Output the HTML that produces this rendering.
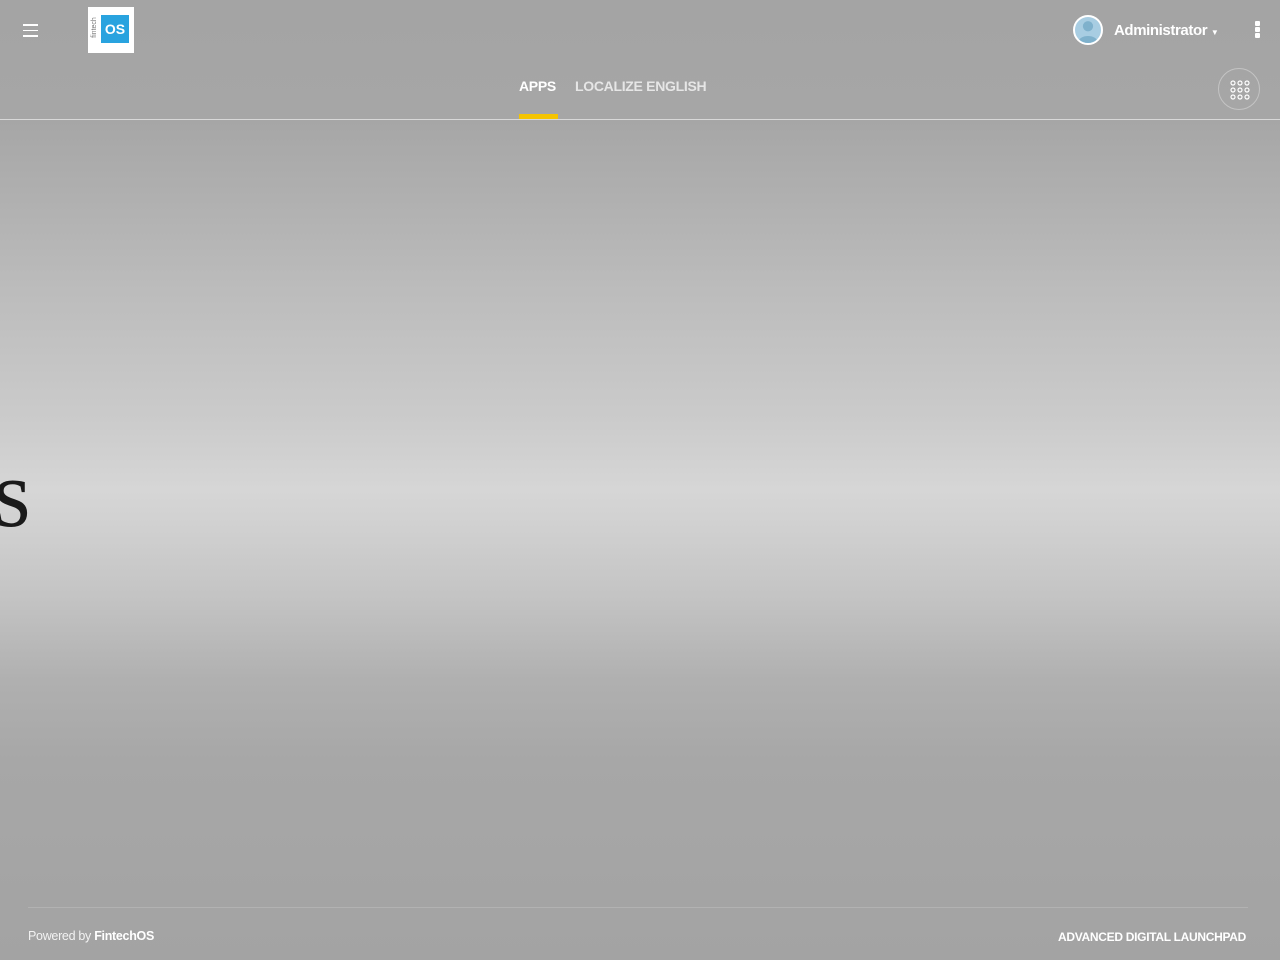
<!DOCTYPE html>
<html><head><meta charset="utf-8"><style>
html,body{margin:0;padding:0;width:1280px;height:960px;overflow:hidden;}
body{position:relative;font-family:"Liberation Sans",sans-serif;
background:linear-gradient(to bottom,#a4a4a4 0px,#a6a6a6 120px,#bdbdbd 300px,#cbcbcb 420px,#d6d6d6 490px,#d0d0d0 530px,#c3c3c3 600px,#b0b0b0 680px,#a7a7a7 760px,#a3a3a3 960px);}
.hdr{position:absolute;left:0;top:0;width:1280px;height:119px;border-bottom:1px solid #d8d8d8;}
.ham{position:absolute;left:23px;top:24px;width:15px;}
.ham div{height:1.5px;background:#fff;margin-bottom:4px;}
.logo{position:absolute;left:88px;top:7px;width:46px;height:46px;background:#fff;}
.logo .b{position:absolute;left:13px;top:8px;width:28px;height:28px;background:#29a3df;color:#fff;font-weight:bold;font-size:14px;line-height:28px;text-align:center;}
.logo .v{position:absolute;left:-4px;top:17px;font-size:7px;color:#777;transform:rotate(-90deg);}
.av{position:absolute;left:1073px;top:15px;width:30px;height:30px;border:2px solid #fff;border-radius:50%;background:#a8cde2;overflow:hidden;box-sizing:border-box;}
.user{position:absolute;left:1114px;top:22px;color:#fff;font-weight:bold;font-size:15px;letter-spacing:-0.4px;}
.dots{position:absolute;left:1255px;top:21px;}
.dots div{width:5px;height:5px;background:#fff;border-radius:1px;margin-bottom:1px;}
.tab{position:absolute;top:78px;font-weight:bold;font-size:14px;color:#e6e6e6;letter-spacing:-0.3px;}
.grid{position:absolute;left:1218px;top:68px;width:42px;height:42px;border:1px solid #c4c4c4;border-radius:50%;box-sizing:border-box;}
.S{position:absolute;left:-7px;top:469px;font-family:"Liberation Serif",serif;font-size:68px;color:#1a1a1a;line-height:1;-webkit-text-stroke:1px #1a1a1a;}
.fl{position:absolute;left:28px;top:907px;width:1220px;height:1px;background:#b2b2b2;}
.f1{position:absolute;left:28px;top:929px;font-size:12.5px;color:#f2f2f2;letter-spacing:-0.3px;}
.f2{position:absolute;right:34px;top:930px;font-size:12px;font-weight:bold;color:#fff;letter-spacing:-0.3px;}
</style></head><body>
<div class="hdr">
<div class="ham"><div></div><div></div><div></div></div>
<div class="logo"><span class="v">fintech</span><div class="b">OS</div></div>
<div class="av"><svg width="26" height="26" viewBox="0 0 28 28"><circle cx="14" cy="10" r="5.5" fill="#7fb1cc"/><path d="M3 28 C4 18 24 18 25 28Z" fill="#7fb1cc"/></svg></div>
<div class="user">Administrator <span style="font-size:8px">&#9660;</span></div>
<div class="dots"><div></div><div></div><div></div></div>
<div class="tab" style="left:519px;color:#fff">APPS</div>
<div style="position:absolute;left:519px;top:114px;width:39px;height:5px;background:#f5c400"></div>
<div class="tab" style="left:575px">LOCALIZE ENGLISH</div>
<div class="grid"><svg width="40" height="40" viewBox="0 0 40 40" style="position:absolute;left:0;top:0">
<g fill="none" stroke="#fff" stroke-width="1.2">
<circle cx="14" cy="14" r="2"/><circle cx="21" cy="14" r="2"/><circle cx="28" cy="14" r="2"/>
<circle cx="14" cy="21" r="2"/><circle cx="21" cy="21" r="2"/><circle cx="28" cy="21" r="2"/>
<circle cx="14" cy="28" r="2"/><circle cx="21" cy="28" r="2"/><circle cx="28" cy="28" r="2"/></g></svg></div>
</div>
<div class="S">S</div>
<div class="fl"></div>
<div class="f1">Powered by <b style="color:#fff">FintechOS</b></div>
<div class="f2">ADVANCED DIGITAL LAUNCHPAD</div>
</body></html>
